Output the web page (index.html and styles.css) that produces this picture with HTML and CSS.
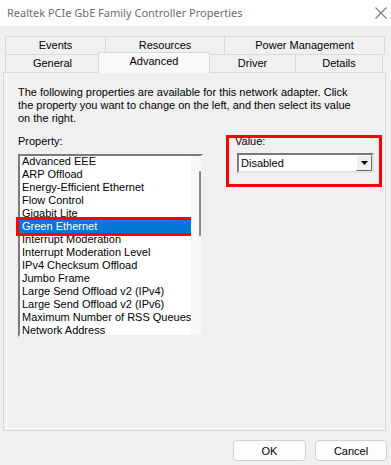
FILE: index.html
```html
<!DOCTYPE html>
<html>

<head>
    <meta name="viewport" content="width=device-width, initial-scale=1.0">
    <title>Realtek PCIe GbE Family Controller Properties</title>
    <link rel="stylesheet" href="styles.css">
</head>

<body>

    <div class="titlebar">
        <span class="title">Realtek PCIe GbE Family Controller Properties</span>
        <svg class="close-icon" width="12" height="12" viewBox="0 0 12 12">
            <path d="M0.5 0.5 L11.5 11.5 M11.5 0.5 L0.5 11.5" stroke="#7a7a7a" stroke-width="1.1" fill="none" />
        </svg>
    </div>

    <div class="dialog">
        <div class="tabs">
            <div class="tab-row">
                <div class="tab tab-events">Events</div>
                <div class="tab tab-resources">Resources</div>
                <div class="tab tab-power">Power Management</div>
            </div>
            <div class="tab-row">
                <div class="tab tab-general">General</div>
                <div class="tab tab-advanced active">Advanced</div>
                <div class="tab tab-driver">Driver</div>
                <div class="tab tab-details">Details</div>
            </div>
        </div>

        <div class="panel">
            <div class="panel-body">
                <p class="intro">The following properties are available for this network adapter. Click<br>the property you want to change on the left, and then select its value<br>on the right.</p>

                <div class="fields">
                    <div class="prop-col">
                        <div class="label">Property:</div>
                        <div class="listbox">
                            <ul class="items">
                                <li>Advanced EEE</li>
                                <li>ARP Offload</li>
                                <li>Energy-Efficient Ethernet</li>
                                <li>Flow Control</li>
                                <li>Gigabit Lite</li>
                                <li class="selected">Green Ethernet</li>
                                <li>Interrupt Moderation</li>
                                <li>Interrupt Moderation Level</li>
                                <li>IPv4 Checksum Offload</li>
                                <li>Jumbo Frame</li>
                                <li>Large Send Offload v2 (IPv4)</li>
                                <li>Large Send Offload v2 (IPv6)</li>
                                <li>Maximum Number of RSS Queues</li>
                                <li class="last">Network Address</li>
                            </ul>
                            <div class="scrollbar">
                                <div class="thumb"></div>
                            </div>
                        </div>
                    </div>

                    <div class="value-col">
                        <div class="label value-label">Value:</div>
                        <div class="combo">
                            <span class="combo-text">Disabled</span>
                            <div class="drop">
                                <svg width="7" height="4" viewBox="0 0 7 4">
                                    <path d="M0 0 H7 L3.5 4 Z" fill="#000" />
                                </svg>
                            </div>
                        </div>
                    </div>
                </div>
            </div>
        </div>

        <div class="buttons">
            <button class="btn btn-ok">OK</button>
            <button class="btn btn-cancel">Cancel</button>
        </div>
    </div>

</body>

</html>
```

FILE: styles.css
```css
body {
    margin: 0;
    background: #f0f0f0;
    font-family: "Liberation Sans", Arial, sans-serif;
    font-size: 11px;
    color: #000;
}

.titlebar {
    height: 26px;
    background: #fff;
    display: flex;
    align-items: center;
    justify-content: space-between;
    padding: 0 4px 1px 7px;
    box-sizing: border-box;
}

.title {
    font-family: "Noto Sans", sans-serif;
    font-size: 11px;
    color: #6d6d6d;
}

.close-icon {
    display: block;
    flex-shrink: 0;
    margin-top: 1px;
}

.dialog {
    padding: 10px 4px 0 3px;
}

.tabs {
    margin-left: 2px;
}

.tab-row {
    display: flex;
}

.tab {
    height: 18px;
    box-sizing: border-box;
    border: 1px solid #d9d9d9;
    border-bottom: none;
    background: #f0f0f0;
    text-align: center;
    line-height: 17px;
    margin-left: -1px;
}

.tab:first-child {
    margin-left: 0;
}

.tab-events { width: 101px; }
.tab-resources { width: 120px; }
.tab-power { width: 161px; }
.tab-general { width: 95px; }
.tab-driver { width: 87px; }
.tab-details { width: 88px; }

.tab-advanced {
    width: 112px;
    height: 21px;
    margin-top: -2px;
    margin-bottom: -1px;
    margin-left: -2px;
    background: #f9f9f9;
    line-height: 16px;
    position: relative;
    z-index: 1;
}

.panel {
    width: 383px;
    height: 359px;
    box-sizing: border-box;
    border: 1px solid #d9d9d9;
}

.panel-body {
    height: 356px;
    box-sizing: border-box;
    margin: 0 0 1px 2px;
    border-left: 1px solid #fff;
    border-bottom: 1px solid #fff;
    padding: 13px 0 0 11px;
}

.intro {
    margin: 0;
    line-height: 13px;
}

.fields {
    display: flex;
    gap: 23px;
    margin-top: 10px;
}

.label {
    line-height: 13px;
}

.listbox {
    margin-top: 6px;
    width: 185px;
    height: 183px;
    box-sizing: border-box;
    background: #fff;
    border: 2px solid;
    border-color: #7a7a7a #f0f0f0 #f0f0f0 #7a7a7a;
    display: flex;
}

.items {
    list-style-type: none;
    margin: -1px 0 0 0;
    padding: 0;
    flex-grow: 1;
}

.items>li {
    height: 13px;
    line-height: 13px;
    padding-left: 2px;
    white-space: nowrap;
}

.items>li.last {
    height: 12px;
    overflow: hidden;
}

.items>li.selected {
    background: #0078d7;
    color: #fff;
    outline: 3px solid #f00;
    margin-left: -1px;
    padding-left: 3px;
}

.scrollbar {
    width: 16px;
    background: #f7f7f7;
    padding: 15px 0 0 8px;
    box-sizing: border-box;
}

.thumb {
    width: 2px;
    height: 65px;
    background: #8a8a8a;
    border-radius: 1px;
}

.value-col {
    width: 156px;
    height: 52px;
    box-sizing: border-box;
    border: 3px solid #f00;
    padding: 0 0 0 6px;
}

.value-label {
    margin-top: -3px;
}

.combo {
    margin: 5px 0 0 2px;
    width: 137px;
    height: 20px;
    box-sizing: border-box;
    background: #fff;
    border: 2px solid;
    border-color: #7a7a7a #e3e3e3 #e3e3e3 #7a7a7a;
    display: flex;
    align-items: center;
    justify-content: space-between;
}

.combo-text {
    padding-left: 2px;
}

.drop {
    width: 16px;
    height: 16px;
    box-sizing: border-box;
    background: #f0f0f0;
    border: 1px solid;
    border-color: #fff #696969 #696969 #fff;
    display: flex;
    align-items: center;
    justify-content: center;
}

.buttons {
    display: flex;
    justify-content: flex-end;
    gap: 9px;
    margin-top: 9px;
}

.btn {
    font-family: "Liberation Sans", Arial, sans-serif;
    font-size: 11px;
    height: 21px;
    background: #fdfdfd;
    border: 1px solid #d0d0d0;
    border-radius: 4px;
    padding: 0;
    color: #000;
}

.btn-ok { width: 73px; }
.btn-cancel { width: 72px; }
```
